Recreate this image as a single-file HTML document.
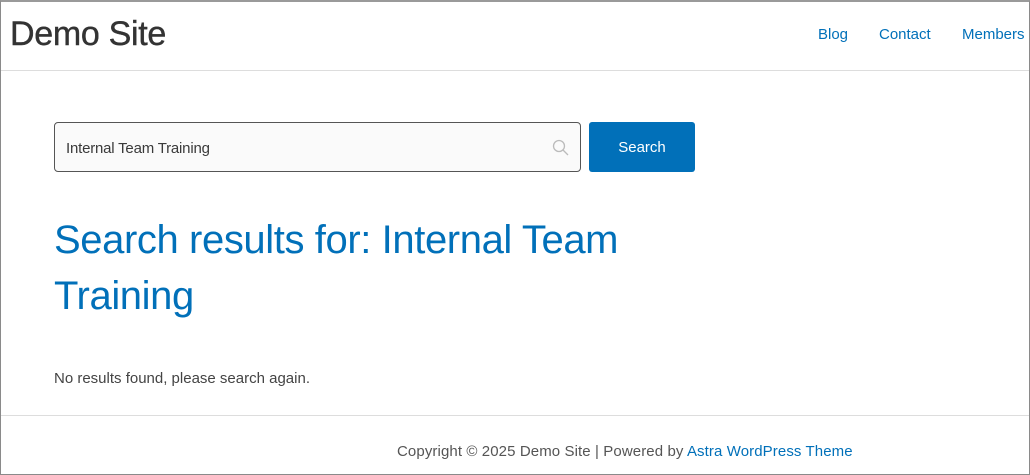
<!DOCTYPE html>
<html><head><meta charset="utf-8"><style>
*{margin:0;padding:0;box-sizing:border-box}
html,body{width:1030px;height:475px;overflow:hidden;background:#fff;font-family:"Liberation Sans",sans-serif}
.frame{position:absolute;left:0;top:0;width:1030px;height:475px;border:1px solid #8a8a8a;border-top:2px solid #9a9a9a}
.logo{position:absolute;left:10px;top:15px;font-size:34px;color:#333;letter-spacing:-0.3px;font-weight:500;-webkit-text-stroke:0.4px #333}
.nav{position:absolute;top:26px;font-size:15px;color:#0170b9}
.hr1{position:absolute;left:1px;right:1px;top:70px;height:1px;background:#ddd}
.input{position:absolute;left:54px;top:122px;width:527px;height:50px;border:1px solid #555;border-radius:4px;background:#fafafa}
.input span{position:absolute;left:11px;top:17px;font-size:15px;color:#3a3a3a;letter-spacing:-0.2px}
.btn{position:absolute;left:589px;top:122px;width:106px;height:50px;background:#0170b9;border-radius:3px;color:#fff;font-size:15px;text-align:center;line-height:52px}
h1{position:absolute;left:54px;top:212px;font-weight:normal;font-size:40px;line-height:56px;color:#0170b9;width:620px;letter-spacing:-0.4px}
.nr{position:absolute;left:54px;top:370px;font-size:15px;color:#444}
.hr2{position:absolute;left:1px;right:1px;top:415px;height:1px;background:#ddd}
.foot{position:absolute;left:397px;top:443px;font-size:15px;color:#555;letter-spacing:0.1px}
.foot a{color:#0170b9;text-decoration:none}
</style></head><body>
<div class="frame"></div>
<div class="logo">Demo Site</div>
<div class="nav" style="left:818px">Blog</div>
<div class="nav" style="left:879px">Contact</div>
<div class="nav" style="left:962px">Members</div>
<div class="hr1"></div>
<div class="input"><span>Internal Team Training</span>
<svg style="position:absolute;left:497px;top:16px" width="18" height="18" viewBox="0 0 18 18"><circle cx="7" cy="7" r="5.5" fill="none" stroke="#bbb" stroke-width="1.3"/><line x1="11" y1="11" x2="16" y2="16" stroke="#bbb" stroke-width="1.3"/></svg></div>
<div class="btn">Search</div>
<h1>Search results for: Internal Team Training</h1>
<div class="nr">No results found, please search again.</div>
<div class="hr2"></div>
<div class="foot">Copyright © 2025 Demo Site | Powered by <a>Astra WordPress Theme</a></div>
</body></html>
